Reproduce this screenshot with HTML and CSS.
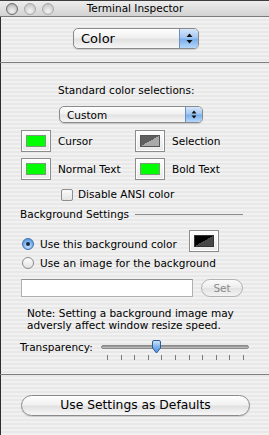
FILE: index.html
```html
<!DOCTYPE html>
<html>
<head>
<meta charset="utf-8">
<link rel="stylesheet" href="styles.css">
</head>
<body>
<div class="win">
  <div class="titlebar">
    <div class="lights"><span class="light close"></span><span class="light"></span><span class="light"></span></div>
    <div class="title">Terminal Inspector</div>
  </div>
  <div class="content">
    <div class="top">
      <div class="popup popup-lg">
        <span class="popup-label">Color</span>
        <span class="popup-arrows"><svg width="7" height="11" viewBox="0 0 7 11"><path d="M3.5 0.5 L6.5 4 L0.5 4 Z" fill="#111"/><path d="M3.5 10.5 L6.5 7 L0.5 7 Z" fill="#111"/></svg></span>
      </div>
    </div>
    <div class="sep"></div>
    <div class="std-label">Standard color selections:</div>
    <div class="popup popup-sm">
      <span class="popup-label">Custom</span>
      <span class="popup-arrows"><svg width="6" height="9" viewBox="0 0 6 9"><path d="M3 0.5 L5.5 3.5 L0.5 3.5 Z" fill="#111"/><path d="M3 8.5 L5.5 5.5 L0.5 5.5 Z" fill="#111"/></svg></span>
    </div>
    <div class="wells">
      <div class="well-item"><span class="well"><span class="swatch green"></span></span><span>Cursor</span></div>
      <div class="well-item"><span class="well"><span class="swatch sel"></span></span><span>Selection</span></div>
      <div class="well-item"><span class="well"><span class="swatch green"></span></span><span>Normal Text</span></div>
      <div class="well-item"><span class="well"><span class="swatch green"></span></span><span>Bold Text</span></div>
    </div>
    <div class="check"><span class="checkbox"></span><span>Disable ANSI color</span></div>
    <div class="group-title"><span>Background Settings</span><span class="group-line"></span></div>
    <div class="radio-row r1"><span class="radio on"><span class="dot"></span></span><span class="rtext">Use this background color</span><span class="well well-bg"><span class="swatch blk"></span></span></div>
    <div class="radio-row r2"><span class="radio"></span><span class="rtext">Use an image for the background</span></div>
    <div class="field-row"><div class="field"></div><div class="set-btn">Set</div></div>
    <div class="note">Note: Setting a background image may<br>adversly affect window resize speed.</div>
    <div class="slider-row">
      <span class="slider-label">Transparency:</span>
      <div class="slider">
        <div class="track"></div>
        <svg class="thumb" width="11" height="14" viewBox="0 0 11 14">
          <defs><linearGradient id="tg" x1="0" y1="0" x2="0" y2="1"><stop offset="0" stop-color="#d6e8fb"/><stop offset="0.5" stop-color="#7fb2ea"/><stop offset="1" stop-color="#4d8fdc"/></linearGradient></defs>
          <path d="M1.5 2 Q1.5 0.5 3 0.5 L8 0.5 Q9.5 0.5 9.5 2 L9.5 8 L5.5 13 L1.5 8 Z" fill="url(#tg)" stroke="#2b5d9a" stroke-width="1"/>
        </svg>
        <div class="ticks"><i></i><i></i><i></i><i></i><i></i><i></i><i></i><i></i><i></i><i></i><i></i></div>
      </div>
    </div>
    <div class="sep sep2"></div>
    <div class="big-btn">Use Settings as Defaults</div>
  </div>
</div>
</body>
</html>
```
FILE: styles.css
```css
* { box-sizing: border-box; }
html, body { margin: 0; padding: 0; }
body {
  width: 269px;
  height: 435px;
  overflow: hidden;
  font-family: "DejaVu Sans", "Liberation Sans", sans-serif;
  font-size: 10.5px;
  color: #000;
  background: #ececec;
}
.win {
  width: 269px;
  height: 435px;
  display: flex;
  flex-direction: column;
}
.titlebar {
  position: relative;
  height: 17px;
  border-top: 1px solid #3c3c3c;
  border-bottom: 1px solid #7b7b7b;
  background: linear-gradient(#ededed, #d2d2d2);
}
.lights { position: absolute; left: 6px; top: 2px; display: flex; gap: 6px; }
.light {
  width: 12px; height: 12px; border-radius: 50%;
  border: 1px solid #a9a9a9;
  background: radial-gradient(circle at 50% 70%, #f4f4f4 0, #dadada 45%, #b9b9b9 100%);
}
.light.close { border-color: #6a6a6a; background: radial-gradient(circle at 50% 70%, #f2f2f2 0, #d4d4d4 45%, #9f9f9f 100%); }
.title {
  text-align: center;
  line-height: 15px;
  font-size: 10.5px;
  padding-left: 1px;
}
.content {
  flex: 1;
  background: repeating-linear-gradient(#f1f1f1 0 2px, #e8e8e8 2px 4px);
  box-shadow: inset 1px 0 #2f2f2f;
}
.top { padding-top: 11px; }
.popup {
  display: flex;
  align-items: center;
  border: 1px solid #8a8a8a;
  border-radius: 5px;
  background: linear-gradient(#ffffff, #f0f0f0 45%, #e2e2e2 55%, #f6f6f6);
  overflow: hidden;
  box-shadow: 0 1px 1px rgba(0,0,0,0.15);
}
.popup-label { flex: 1; }
.popup-arrows {
  align-self: stretch;
  display: flex; align-items: center; justify-content: center;
  border-left: 1px solid #6b8fbf;
  background: linear-gradient(#d5e6fa, #a4c8f1 45%, #7bb0ec 55%, #b6d7fb);
}
.popup-lg { margin-left: 73px; width: 126px; height: 21px; font-size: 13px; }
.popup-lg .popup-label { padding-left: 7px; }
.popup-lg .popup-arrows { width: 19px; }
.popup-sm { margin-left: 59px; width: 144px; height: 17px; font-size: 10.5px; }
.popup-sm .popup-label { padding-left: 7px; }
.popup-sm .popup-arrows { width: 17px; }
.sep { margin-top: 13px; height: 1px; background: #7d7d7d; }
.std-label { margin-top: 20px; line-height: 14px; padding-left: 58px; }
.popup-sm { margin-top: 9px; }
.wells {
  margin-top: 7px;
  padding-left: 21px;
  display: grid;
  grid-template-columns: 114px 1fr;
  grid-auto-rows: 22px;
  row-gap: 6px;
}
.well-item { display: flex; align-items: center; gap: 7px; }
.well {
  width: 30px; height: 22px;
  border: 1px solid #8c8c8c;
  background: linear-gradient(#fdfdfd, #e9e9e9);
  padding: 4px;
  display: flex;
  box-shadow: inset 0 0 0 1px #fff;
}
.swatch { flex: 1; border: 1px solid #6e6e6e; }
.swatch.green { background: #00ff00; border-color: #7a9a7a; }
.swatch.sel { background: linear-gradient(to bottom right, #5e5e5e 50%, #a9a9a9 50%); border-color: #555; }
.swatch.blk { background: linear-gradient(to bottom right, #000 50%, #474747 50%); border-color: #333; }
.check { margin-top: 8px; height: 13px; padding-left: 61px; display: flex; align-items: center; gap: 5px; line-height: 13px; }
.checkbox {
  width: 12px; height: 12px;
  border: 1px solid #8e8e8e; border-radius: 2px;
  background: linear-gradient(#fafafa, #e4e4e4);
}
.group-title { margin-top: 6px; height: 14px; padding-left: 20px; padding-right: 26px; display: flex; align-items: center; gap: 6px; }
.group-line { flex: 1; height: 1px; background: #8a8a8a; }
.radio-row { display: flex; padding-left: 22px; gap: 6px; }
.r1 { margin-top: 9px; height: 22px; padding-right: 50px; align-items: flex-end; }
.r1 .radio { margin-bottom: 2px; }
.r1 .rtext { margin-bottom: 1px; line-height: 14px; }
.r1 .well-bg { margin-left: auto; }
.r2 { margin-top: 4px; height: 14px; align-items: center; }
.radio {
  width: 12px; height: 12px; border-radius: 50%;
  border: 1px solid #8a8a8a;
  background: linear-gradient(#fdfdfd, #e2e2e2);
  display: flex; align-items: center; justify-content: center;
  flex: none;
}
.radio.on {
  border-color: #3d6fad;
  background: radial-gradient(circle at 50% 70%, #cfe6ff 0, #7fb4ee 50%, #3f86da 100%);
}
.dot { width: 4px; height: 4px; border-radius: 50%; background: #1a2a40; }
.field-row { margin-top: 9px; height: 18px; padding-left: 21px; display: flex; gap: 8px; }
.field {
  width: 172px; height: 18px;
  background: #fff;
  border: 1px solid #b0b0b0;
  border-top-color: #8e8e8e;
}
.set-btn {
  width: 42px; height: 18px;
  border: 1px solid #b3b3b3; border-radius: 9px;
  background: linear-gradient(#fbfbfb, #ececec 50%, #e2e2e2 51%, #f3f3f3);
  color: #8a8a8a;
  text-align: center; line-height: 16px;
}
.note { margin-top: 10px; line-height: 12px; padding-left: 27px; height: 24px; }
.slider-row { margin-top: 9px; height: 21px; display: flex; padding-left: 20px; }
.slider-label { width: 81px; line-height: 14px; }
.slider { position: relative; width: 148px; height: 21px; }
.track {
  position: absolute; left: 0; right: 0; top: 5px; height: 4px;
  border-radius: 2px;
  background: linear-gradient(#8a8a8a, #c9c9c9);
  border: 1px solid #8c8c8c;
}
.thumb { position: absolute; left: 50px; top: 0; }
.ticks { position: absolute; left: 6px; width: 137px; top: 15px; height: 5px; display: flex; justify-content: space-between; }
.ticks i { width: 1px; height: 5px; background: #7a7a7a; }
.sep2 { margin-top: 13px; }
.big-btn {
  margin-top: 20px; margin-left: 21px;
  width: 229px; height: 21px;
  border: 1px solid #8a8a8a; border-radius: 11px;
  background: linear-gradient(#ffffff, #f1f1f1 45%, #e1e1e1 55%, #f7f7f7);
  text-align: center; line-height: 19px;
  font-size: 12.3px;
  box-shadow: 0 1px 1px rgba(0,0,0,0.12);
}
```
